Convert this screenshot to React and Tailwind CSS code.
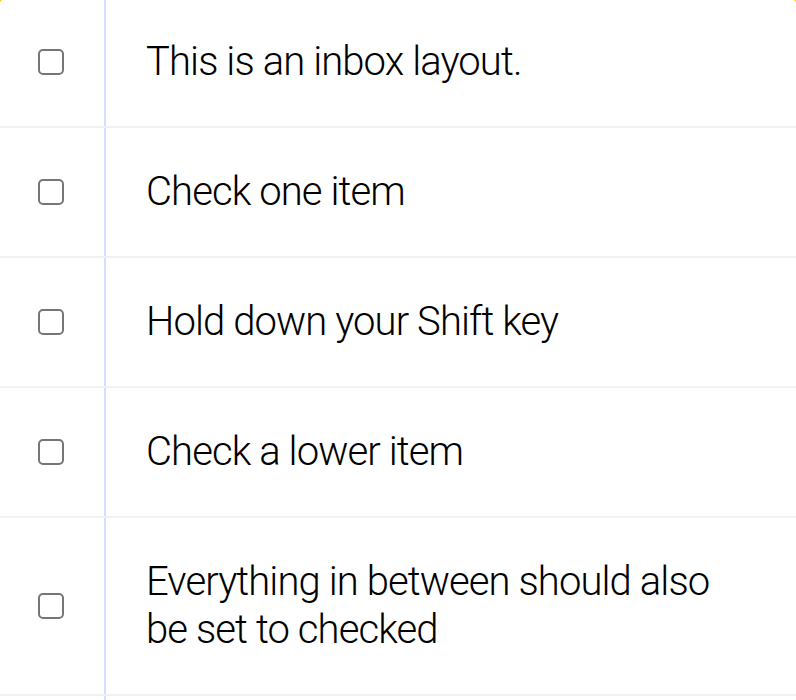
import React from "react";

const items = [
  "This is an inbox layout.",
  "Check one item",
  "Hold down your Shift key",
  "Check a lower item",
  "Everything in between should also be set to checked",
];

export default function App() {
  return (
    <div className="h-[700px] w-[796px] overflow-hidden bg-[#ffc600]">
      <div className="-ml-[2px] -mt-[2px] w-[800px] rounded-[10px] bg-white">
        {items.map((t) => (
          <div key={t} className="flex items-center border-b-2 border-[#f1f1f1]">
            <div className="mx-[40px] h-[26px] w-[26px] shrink-0 rounded-[5px] border-2 border-[#767676] bg-white" />
            <p
              className="m-0 flex-1 border-l-2 border-[#d1e2ff] p-[40px] text-[40px] leading-[48px] font-light tracking-[-0.9px] text-black"
              style={{ fontFamily: '"Helvetica Neue", Roboto, "Liberation Sans", sans-serif' }}
            >
              {t}
            </p>
          </div>
        ))}
        <div className="flex h-[40px]">
          <div className="w-[106px] shrink-0" />
          <div className="flex-1 border-l-2 border-[#d1e2ff]" />
        </div>
      </div>
    </div>
  );
}
